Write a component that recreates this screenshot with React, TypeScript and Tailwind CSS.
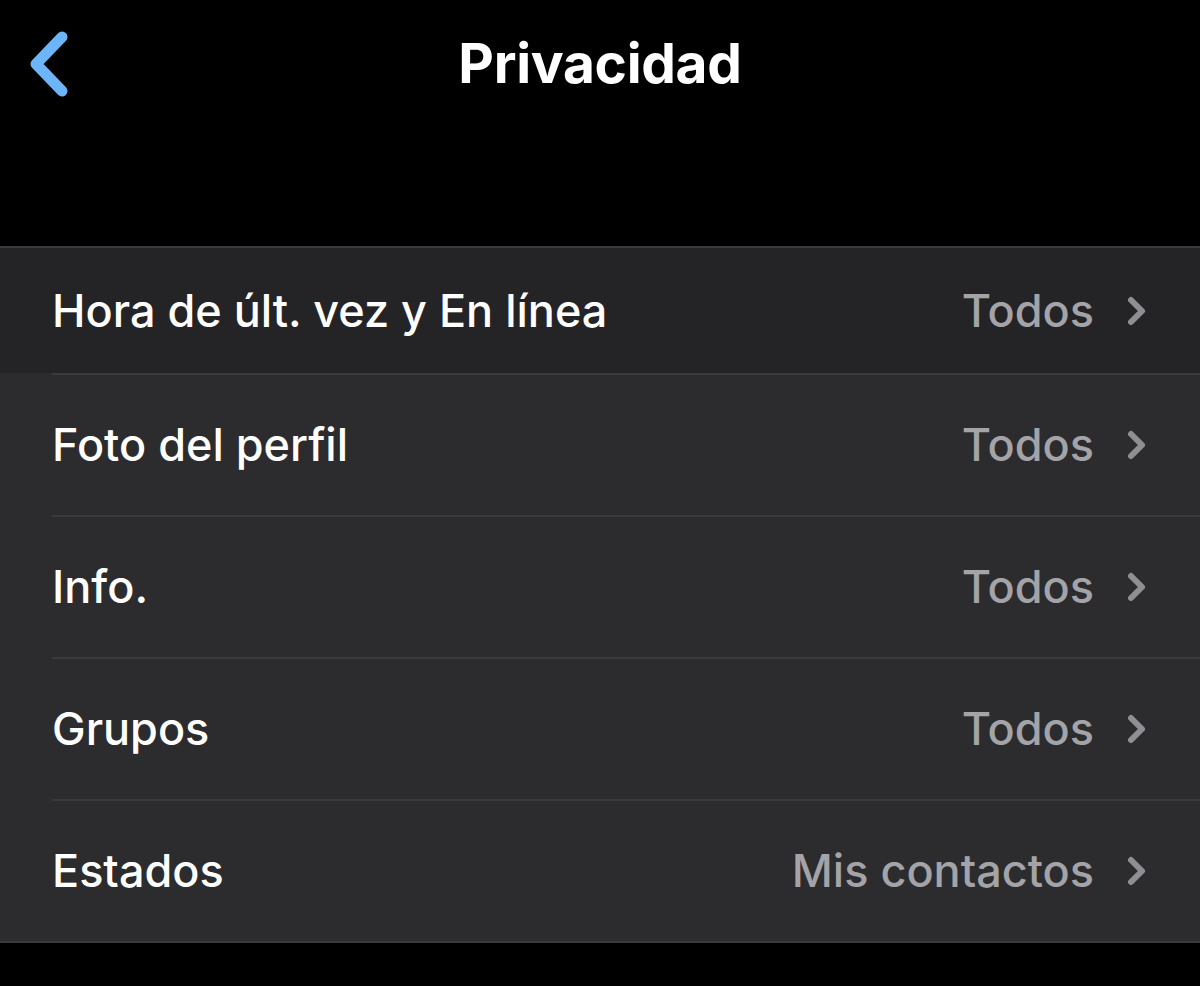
import { FC } from "react";

type Row = {
  label: string;
  value: string;
};

const rows: Row[] = [
  { label: "Hora de últ. vez y En línea", value: "Todos" },
  { label: "Foto del perfil", value: "Todos" },
  { label: "Info.", value: "Todos" },
  { label: "Grupos", value: "Todos" },
  { label: "Estados", value: "Mis contactos" },
];

const BackIcon: FC = () => (
  <svg width="44" height="70" viewBox="0 0 44 70" fill="none">
    <path
      d="M35 7 L9 34 L35 61"
      stroke="#6db5f9"
      strokeWidth="11"
      strokeLinecap="round"
      strokeLinejoin="round"
    />
  </svg>
);

const Chevron: FC = () => (
  <svg width="22" height="36" viewBox="0 0 22 36" fill="none">
    <path
      d="M5 7 L16 18 L5 29"
      stroke="#8e8e93"
      strokeWidth="6"
      strokeLinecap="round"
      strokeLinejoin="round"
    />
  </svg>
);

const App: FC = () => {
  return (
    <div
      className="flex h-[986px] w-[1200px] flex-col bg-black"
      style={{ fontFamily: "Inter, 'Noto Sans', sans-serif" }}
    >
      <header className="relative flex h-[246px] justify-center">
        <button className="absolute left-[27px] top-[30px]">
          <BackIcon />
        </button>
        <h1 className="mt-[27px] text-[55px] font-bold leading-[72px] tracking-[-0.3px] text-white">
          Privacidad
        </h1>
      </header>

      <ul className="border-y-2 border-[#3a3a3c] bg-[#2c2c2e]">
        {rows.map((row, i) => (
          <li
            key={row.label}
            className={`flex items-stretch pl-[52px] ${i === 0 ? "h-[125px] bg-[#242426]" : "h-[142px]"}`}
          >
            <div
              className={`flex flex-1 items-center justify-between pr-[52px] ${i === 0 ? "" : "border-t-2 border-[#3a3a3c]"}`}
            >
              <span className="text-[45px] font-medium tracking-[0px] text-white">
                {row.label}
              </span>
              <span className="flex items-center gap-[32px]">
                <span className="text-[45px] font-medium tracking-[0px] text-[#a3a3a8]">
                  {row.value}
                </span>
                <Chevron />
              </span>
            </div>
          </li>
        ))}
      </ul>
    </div>
  );
};

export default App;
